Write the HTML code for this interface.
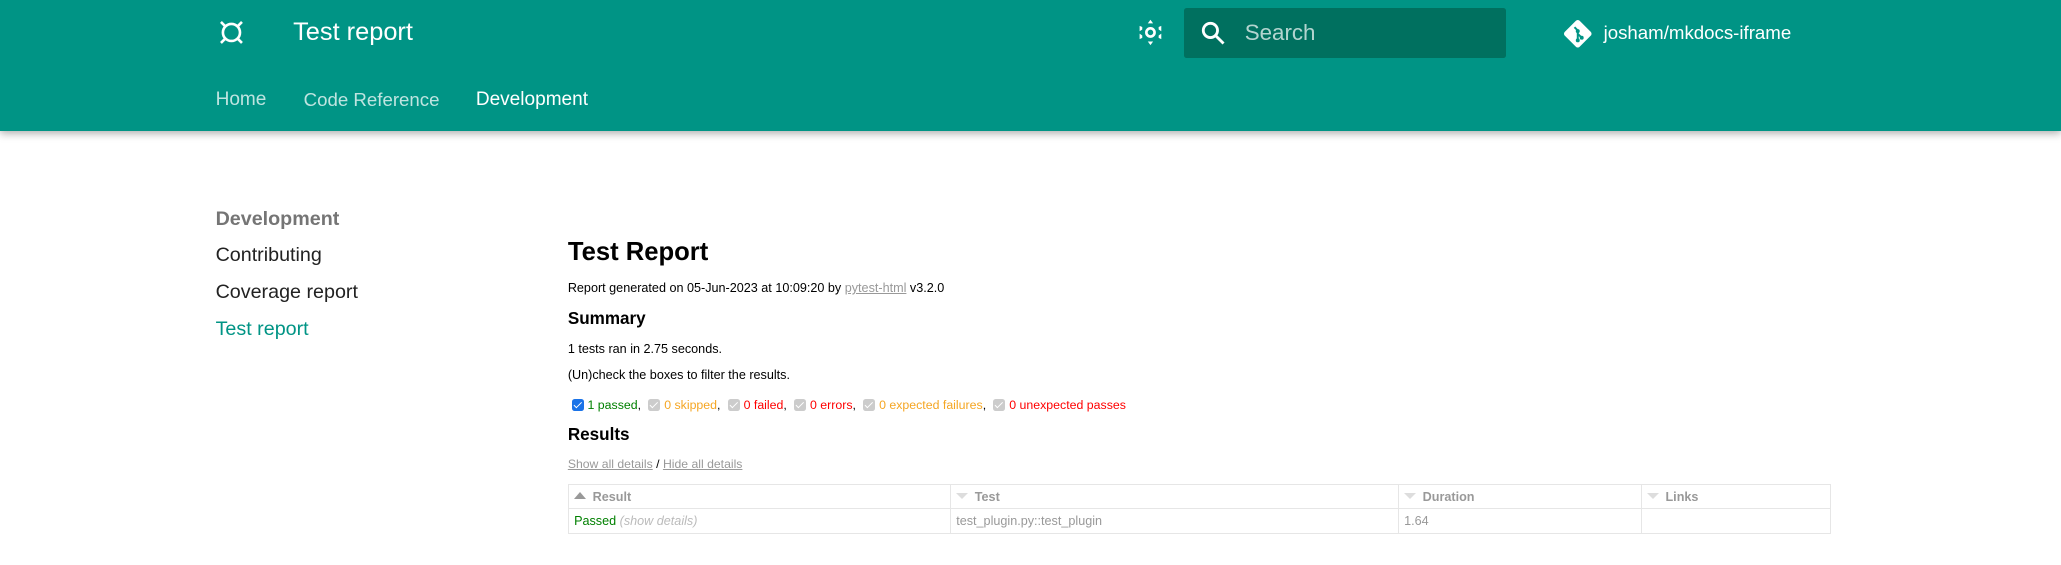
<!DOCTYPE html>
<html><head><meta charset="utf-8"><style>
html,body{margin:0;padding:0;background:#fff;overflow:hidden;width:2061px;height:565px}
#w{zoom:1.31441;width:1568px;height:430px;position:relative;font-family:"Liberation Sans",Arial,sans-serif}
.hd{position:absolute;left:0;top:0;width:1568px;height:100px;background:#009485;box-shadow:0 0 6px rgba(0,0,0,.25),0 3px 6px rgba(0,0,0,.15)}
.a{position:absolute;white-space:nowrap}
.t{color:#fff}
.sb{font-size:15px;color:#222}
.c{font-size:9.6px;color:#000}
.h2{font-size:13px;font-weight:bold;color:#000}
.cb{display:inline-block;width:9px;height:9px;border-radius:2px;background:#ccc;vertical-align:-1px;margin:0 3px 0 3px;position:relative}
.cb:after{content:"";position:absolute;left:3px;top:1px;width:2px;height:5px;border:solid #fff;border-width:0 1.3px 1.3px 0;transform:rotate(45deg)}
.cb.on{background:#1a73e8}
table{position:absolute;left:432px;top:368px;width:961px;border-collapse:collapse;font-size:9.6px}
td{border:1px solid #e6e6e6;height:18px;padding:0 4px;color:#999}
th{border:1px solid #e6e6e6;height:18px;padding:0 4px;text-align:left;color:#999;font-weight:bold}
.tri{display:inline-block;width:0;height:0;border-left:5px solid transparent;border-right:5px solid transparent;border-top:5px solid #ddd;margin-right:5px;vertical-align:1px}
.tri.up{border-top:0;border-bottom:6px solid #999}
</style></head><body><div id="w">
<div class="hd"></div>
<svg class="a" style="left:165px;top:14px" width="22" height="22" viewBox="0 0 22 22" fill="none" stroke="#fff" stroke-width="2"><circle cx="11" cy="11" r="6.5"/><path d="M3 3l3.5 3.5M19 3l-3.5 3.5M3 19l3.5-3.5M19 19l-3.5-3.5"/></svg>
<div class="a t" style="left:223px;top:14px;font-size:19.3px">Test report</div>
<svg class="a" style="left:864px;top:14px" width="22" height="22" viewBox="0 0 24 24" fill="#fff"><path d="M12 7.5a4.5 4.5 0 1 0 0 9 4.5 4.5 0 0 0 0-9zm0 6.8a2.3 2.3 0 1 1 0-4.6 2.3 2.3 0 0 1 0 4.6z"/><path d="M12 1.5l-2.2 3h4.4zM12 22.5l-2.2-3h4.4zM3 6.5v4.5l2.2-1.5V7.5zM3 13v4.5l2.2-1v-2zM21 6.5v4.5l-2.2-1.5V7.5zM21 13v4.5l-2.2-1v-2z"/></svg>
<div class="a" style="left:901px;top:6px;width:245px;height:38px;background:#00705f;border-radius:2px"></div>
<svg class="a" style="left:913px;top:15px" width="20" height="20" viewBox="0 0 24 24" fill="none" stroke="#fff" stroke-width="2.6"><circle cx="9.5" cy="9.5" r="6.5"/><path d="M14.5 14.5l7 7"/></svg>
<div class="a" style="left:947px;top:15px;font-size:17px;color:rgba(255,255,255,.7)">Search</div>
<svg class="a" style="left:1188px;top:14px" width="24" height="24" viewBox="0 0 24 24"><rect x="4" y="4" width="16" height="16" rx="2" fill="#fff" transform="rotate(45 12 12)"/><path d="M9.5 7l2.5 2.5v7M12 12l3 3" stroke="#009485" stroke-width="1.5" fill="none"/><circle cx="12" cy="17" r="1.5" fill="#009485"/><circle cx="12" cy="10" r="1.5" fill="#009485"/><circle cx="15" cy="15" r="1.5" fill="#009485"/></svg>
<div class="a t" style="left:1220px;top:17px;font-size:14.2px">josham/mkdocs-iframe</div>
<div class="a" style="left:164px;top:68px;font-size:14.5px;line-height:17px;color:rgba(255,255,255,.75)">Home</div>
<div class="a" style="left:231px;top:68px;font-size:14.2px;line-height:17px;color:rgba(255,255,255,.75)">Code Reference</div>
<div class="a t" style="left:362px;top:68px;font-size:14.5px;line-height:17px">Development</div>
<div class="a sb" style="left:164px;top:158px;font-weight:bold;color:#757575">Development</div>
<div class="a sb" style="left:164px;top:186px">Contributing</div>
<div class="a sb" style="left:164px;top:214px">Coverage report</div>
<div class="a sb" style="left:164px;top:242px;color:#009485">Test report</div>
<div class="a" style="left:432px;top:181px;font-size:19.5px;font-weight:bold">Test Report</div>
<div class="a c" style="left:432px;top:214px">Report generated on 05-Jun-2023 at 10:09:20 by <span style="color:#999;text-decoration:underline">pytest-html</span> v3.2.0</div>
<div class="a h2" style="left:432px;top:235px">Summary</div>
<div class="a c" style="left:432px;top:260px">1 tests ran in 2.75 seconds.</div>
<div class="a c" style="left:432px;top:280px">(Un)check the boxes to filter the results.</div>
<div class="a c" style="left:432px;top:303px;font-size:9.4px"><span class="cb on"></span><span style="color:#008000">1 passed</span>, <span class="cb"></span><span style="color:#f5a623">0 skipped</span>, <span class="cb"></span><span style="color:#f00">0 failed</span>, <span class="cb"></span><span style="color:#f00">0 errors</span>, <span class="cb"></span><span style="color:#f5a623">0 expected failures</span>, <span class="cb"></span><span style="color:#f00">0 unexpected passes</span></div>
<div class="a h2" style="left:432px;top:323px">Results</div>
<div class="a c" style="left:432px;top:348px;color:#999;font-size:9.3px"><u>Show all details</u> <span style="color:#000">/</span> <u>Hide all details</u></div>
<table><tr><th style="width:282px"><span class="tri up"></span>Result</th><th style="width:332px"><span class="tri"></span>Test</th><th style="width:176px"><span class="tri"></span>Duration</th><th><span class="tri"></span>Links</th></tr>
<tr><td><span style="color:#008000">Passed</span> <i style="color:#bbb">(show details)</i></td><td>test_plugin.py::test_plugin</td><td>1.64</td><td></td></tr></table>
</div></body></html>
